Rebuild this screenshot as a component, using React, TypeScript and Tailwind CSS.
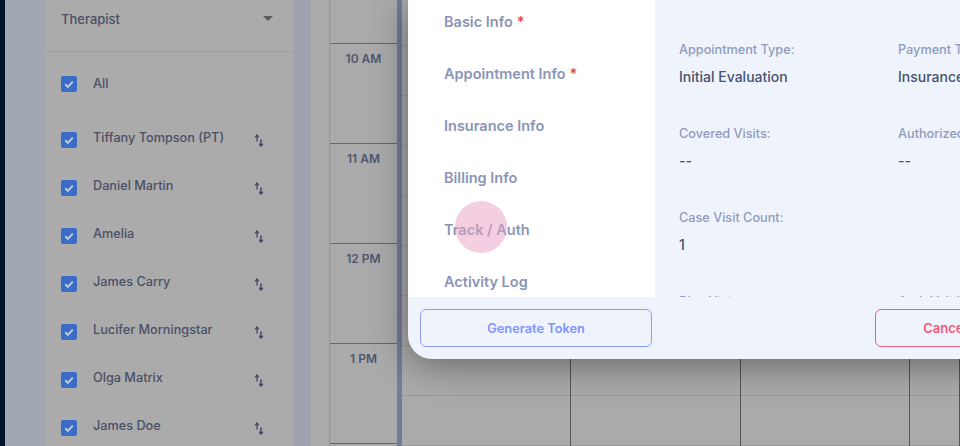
import React from 'react';

const therapists = ['Tiffany Tompson (PT)', 'Daniel Martin', 'Amelia', 'James Carry', 'Lucifer Morningstar', 'Olga Matrix', 'James Doe'];
const hours = ['', '10 AM', '11 AM', '12 PM', '1 PM', ''];
const slots = [0, 1, 2, 3, 4, 5, 6, 7, 8, 9, 10];
const navItems = [
  { label: 'Basic Info', required: true },
  { label: 'Appointment Info', required: true },
  { label: 'Insurance Info', required: false },
  { label: 'Billing Info', required: false },
  { label: 'Track / Auth', required: false },
  { label: 'Activity Log', required: false },
];
const fields = [
  { label: 'Appointment Type:', value: 'Initial Evaluation' },
  { label: 'Payment Type:', value: 'Insurance' },
  { label: 'Covered Visits:', value: '--' },
  { label: 'Authorized Visits:', value: '--' },
  { label: 'Case Visit Count:', value: '1' },
  { label: '', value: '' },
  { label: 'Plan Visits:', value: '--' },
  { label: 'Auth Validity:', value: '--' },
];

const CheckBox = () => (
  <span className="flex h-4 w-4 shrink-0 items-center justify-center rounded-[2px] bg-[#3a6cc8]">
    <svg width="12" height="12" viewBox="0 0 12 12" fill="none">
      <path d="M2.2 6.2 4.9 8.8 9.8 3.6" stroke="#c4cad6" strokeWidth="1.9" />
    </svg>
  </span>
);

const SortIcon = () => (
  <svg width="10" height="13" viewBox="0 0 10 13" fill="none" className="shrink-0">
    <path d="M3 7.5V1.5M1.2 3.2 3 1 4.8 3.2" stroke="#4a4f5c" strokeWidth="1.4" />
    <path d="M7 5.5v6M5.2 9.8 7 12l1.8-2.2" stroke="#3c4a63" strokeWidth="1.4" />
  </svg>
);

const Sidebar = () => (
  <aside className="w-[248px] shrink-0 bg-[#ababab] text-[#4a5066]">
    <div className="flex h-[52px] items-start justify-between border-b border-[#9f9f9f] pl-4 pr-5 pt-[10px]">
      <span className="text-[13px] font-medium leading-[18px]">Therapist</span>
      <span className="mt-[6px] h-0 w-0 border-x-[5px] border-t-[5px] border-x-transparent border-t-[#5a5a5a]" />
    </div>
    <div className="flex h-[48px] items-center pl-4 pt-[15px]">
      <CheckBox />
      <span className="ml-4 text-[12.7px] font-medium">All</span>
    </div>
    <div className="pt-[16px]">
      {therapists.map((name) => (
        <div key={name} className="flex h-[48px] items-center pl-4 pr-[29px]">
          <CheckBox />
          <span className="ml-4 flex-1 -translate-y-[2px] whitespace-nowrap text-[12.7px] font-medium">{name}</span>
          <SortIcon />
        </div>
      ))}
    </div>
  </aside>
);

const Calendar = () => (
  <div className="flex min-w-0 flex-1 bg-[#aaaaaa]">
    <div className="w-[20px] shrink-0 border-l border-[#999cab]" />
    <div className="-mt-[56px] w-[68px] shrink-0 border-l border-[#979797]">
      {hours.map((h, i) => (
        <div key={i} className="h-[100px] border-b border-[#5f6781] pt-[7px] text-center text-[12px] font-semibold leading-[16px] text-[#4f566f]">
          {h}
        </div>
      ))}
    </div>
    <div className="w-[5px] shrink-0 bg-[#767a9e]" />
    <div className="-mt-[4px] grid flex-1 grid-cols-[169px_170px_169px_1fr]">
      {[0, 1, 2, 3].map((col) => (
        <div key={col} className="border-r border-[#555555]">
          {slots.map((s) => (
            <div key={s} className="h-[50px] border-b border-[#999999]" />
          ))}
        </div>
      ))}
    </div>
  </div>
);

const Modal = () => (
  <div className="absolute left-[408px] top-0 flex h-[359px] w-[640px] flex-col overflow-hidden rounded-bl-[24px] bg-[#eff4fc] shadow-[0_6px_36px_rgba(0,0,0,0.4)]">
    <div className="flex h-[297px] overflow-hidden">
      <nav className="w-[247px] shrink-0 bg-white pl-9">
        {navItems.map((item, i) => (
          <div key={item.label} className={`flex h-[52px] items-center text-[14.5px] font-semibold text-[#8a94b6] ${i === 0 ? '-mt-[4px]' : ''}`}>
            <span>{item.label}</span>
            {item.required && <span className="ml-1 text-[#e5484d]">*</span>}
          </div>
        ))}
      </nav>
      <div className="grid flex-1 grid-cols-[219px_1fr] content-start gap-y-[34px] pl-6 pt-[42px]">
        {fields.map((f, i) => (
          <div key={i} className="h-[50px]">
            <div className="text-[12.7px] font-medium leading-[16px] text-[#8f9bbd]">{f.label}</div>
            <div className="mt-[11px] text-[14px] font-medium leading-[16px] text-[#465270]">{f.value}</div>
          </div>
        ))}
      </div>
    </div>
    <div className="flex flex-1 items-start justify-between px-3 pt-3">
      <button className="h-[38px] w-[232px] rounded-[6px] border border-[#8a9cff] pt-px text-[12.8px] font-semibold text-[#7f93ff]">
        Generate Token
      </button>
      <button className="h-[38px] w-[161px] rounded-[6px] border border-[#f2607f] pr-[21px] pt-px text-[13px] font-semibold text-[#f4587a]">
        Cancel
      </button>
    </div>
  </div>
);

export default function App() {
  return (
    <div className="relative flex h-[446px] w-[960px] overflow-hidden bg-[#aaaaaa] font-['Inter','Liberation_Sans',sans-serif]">
      <div className="w-[5px] shrink-0 bg-[#00142e]" />
      <div className="w-[40px] shrink-0 bg-[#a0a7b3]" />
      <Sidebar />
      <div className="w-[16px] shrink-0 bg-[#9ea3ad]" />
      <Calendar />
      <Modal />
      {/* click highlight from the recording */}
      <div className="absolute left-[455px] top-[201px] h-[52px] w-[52px] rounded-full bg-[#e8a0c4]/50" />
    </div>
  );
}
